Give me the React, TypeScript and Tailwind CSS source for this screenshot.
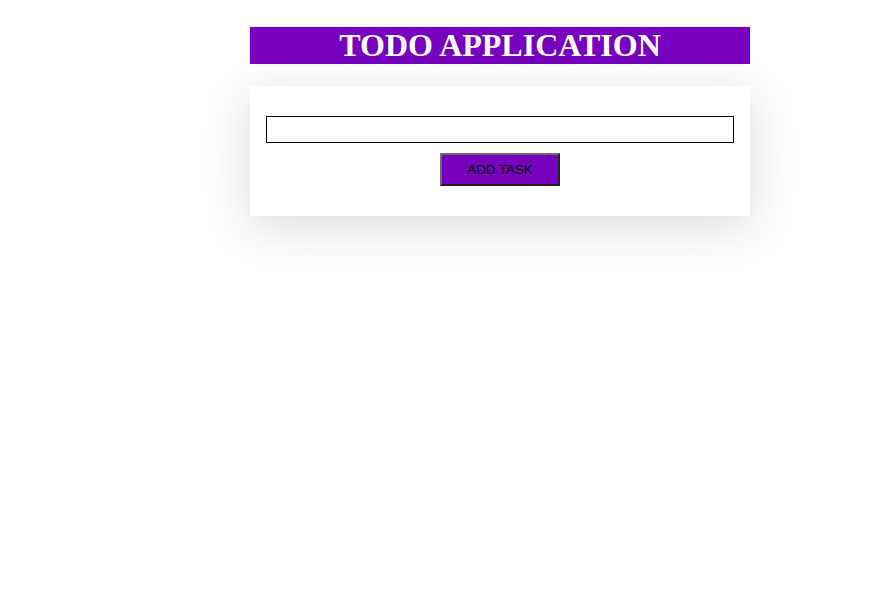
import { useState } from "react";

const App = () => {
  const [task, setTask] = useState("");

  return (
    <div className="min-h-[610px] w-full bg-white pt-[27px]">
      <div className="ml-[250px] w-[500px]">
        <h1 className="bg-[#7700bf] text-center font-['Liberation_Serif',serif] text-[32px] font-bold leading-[37px] text-white">
          TODO APPLICATION
        </h1>
        <div className="mt-[22px] flex flex-col items-center bg-white px-4 pb-[30px] pt-[30px] shadow-[0_10px_50px_rgba(0,0,0,0.15)]">
          <input
            value={task}
            onChange={(e) => setTask(e.target.value)}
            className="h-[27px] w-full border border-black bg-white px-1 font-['Liberation_Sans',sans-serif] text-[13px] outline-none"
          />
          <button className="mt-[10px] h-[33px] w-[120px] border-2 border-b-[#222] border-l-[#6e6e6e] border-r-[#222] border-t-[#6e6e6e] bg-[#7700bf] font-['Liberation_Sans',sans-serif] text-[13.33px] text-black">
            ADD TASK
          </button>
        </div>
      </div>
    </div>
  );
};

export default App;
